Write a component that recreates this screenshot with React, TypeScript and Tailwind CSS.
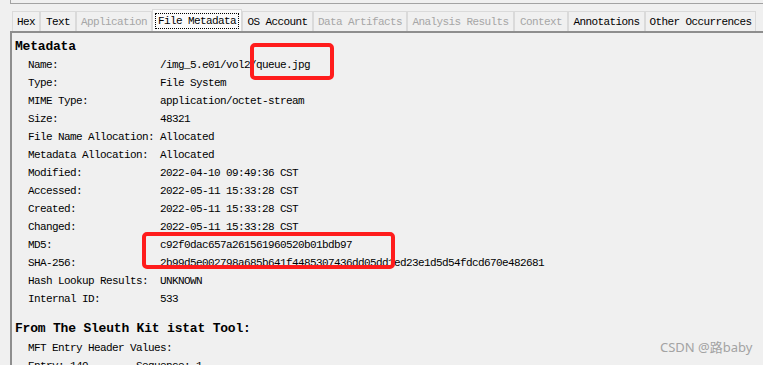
import React from 'react';

const tabs = [
  { label: 'Hex', w: 28, enabled: true },
  { label: 'Text', w: 36, enabled: true },
  { label: 'Application', w: 76, enabled: false },
  { label: 'File Metadata', w: 90, enabled: true, selected: true },
  { label: 'OS Account', w: 71, enabled: true },
  { label: 'Data Artifacts', w: 94, enabled: false },
  { label: 'Analysis Results', w: 107, enabled: false },
  { label: 'Context', w: 54, enabled: false },
  { label: 'Annotations', w: 77, enabled: true },
  { label: 'Other Occurrences', w: 111, enabled: true },
];

const rows: [string, string][] = [
  ['Name:', '/img_5.e01/vol2/queue.jpg'],
  ['Type:', 'File System'],
  ['MIME Type:', 'application/octet-stream'],
  ['Size:', '48321'],
  ['File Name Allocation:', 'Allocated'],
  ['Metadata Allocation:', 'Allocated'],
  ['Modified:', '2022-04-10 09:49:36 CST'],
  ['Accessed:', '2022-05-11 15:33:28 CST'],
  ['Created:', '2022-05-11 15:33:28 CST'],
  ['Changed:', '2022-05-11 15:33:28 CST'],
  ['MD5:', 'c92f0dac657a261561960520b01bdb97'],
  ['SHA-256:', '2b99d5e002798a685b641f4485307436dd05dd1ed23e1d5d54fdcd670e482681'],
  ['Hash Lookup Results:', 'UNKNOWN'],
  ['Internal ID:', '533'],
];

const mono = { fontFamily: '"Liberation Mono", "Noto Sans CJK SC", monospace' };

export default function App() {
  return (
    <div
      className="relative w-[763px] h-[365px] overflow-hidden bg-[#f0f0f0] text-black text-[11px] tracking-[-0.6px]"
      style={mono}
    >
      {/* panel edge above the tabs */}
      <div className="ml-[10px] h-[4px] border-l border-b border-[#a3a3a3]" />

      {/* tab strip */}
      <div className="ml-[12px] mt-[5px] flex items-end h-[22px]">
        {tabs.map((t) =>
          t.selected ? (
            <div
              key={t.label}
              style={{ width: t.w }}
              className="h-[22px] flex items-center justify-center bg-[#fbfbfb] border border-b-0 border-[#d9d9d9]"
            >
              <span className="px-[2px] leading-[14px] border border-dotted border-black">{t.label}</span>
            </div>
          ) : (
            <div
              key={t.label}
              style={{ width: t.w }}
              className={
                'h-[20px] pt-px flex items-center justify-center border border-b-0 border-[#dadada] ' +
                (t.enabled ? 'text-black' : 'text-[#a6a6a6]')
              }
            >
              {t.label}
            </div>
          )
        )}
      </div>

      {/* content */}
      <div className="ml-[10px] h-[400px] border-t-2 border-l-2 border-[#8e8e8e]">
        <div className="mt-[5px] pl-[3px] h-[18px] leading-[18px] text-[13px] font-bold tracking-[-0.2px]">Metadata</div>
        <div className="pl-[16px]">
          {rows.map(([k, v]) => (
            <div key={k} className="flex h-[18px] leading-[18px] whitespace-nowrap">
              <div className="w-[132px] shrink-0">{k}</div>
              <div>{v}</div>
            </div>
          ))}
        </div>
        <div className="mt-[12px] pl-[3px] h-[18px] leading-[18px] text-[13px] font-bold tracking-[-0.2px]">
          From The Sleuth Kit istat Tool:
        </div>
        <div className="pl-[16px] mt-[1px]">
          <div className="h-[18px] leading-[18px]">MFT Entry Header Values:</div>
          <div className="h-[18px] leading-[18px] whitespace-pre">Entry: 149        Sequence: 1</div>
        </div>
      </div>

      {/* red annotation boxes */}
      <div className="absolute left-[250px] top-[43px] w-[84px] h-[37px] border-4 border-[#ff1c1c] rounded-[5px]" />
      <div className="absolute left-[142px] top-[232px] w-[253px] h-[37px] border-4 border-[#ff1c1c] rounded-[5px]" />

      {/* watermark */}
      <div
        className="absolute left-[660px] top-[338px] text-[13px] leading-[18px] tracking-normal text-[#a3a3a3]"
        style={{ fontFamily: '"Noto Sans", "Noto Sans CJK SC", sans-serif' }}
      >
        CSDN @路baby
      </div>
    </div>
  );
}
